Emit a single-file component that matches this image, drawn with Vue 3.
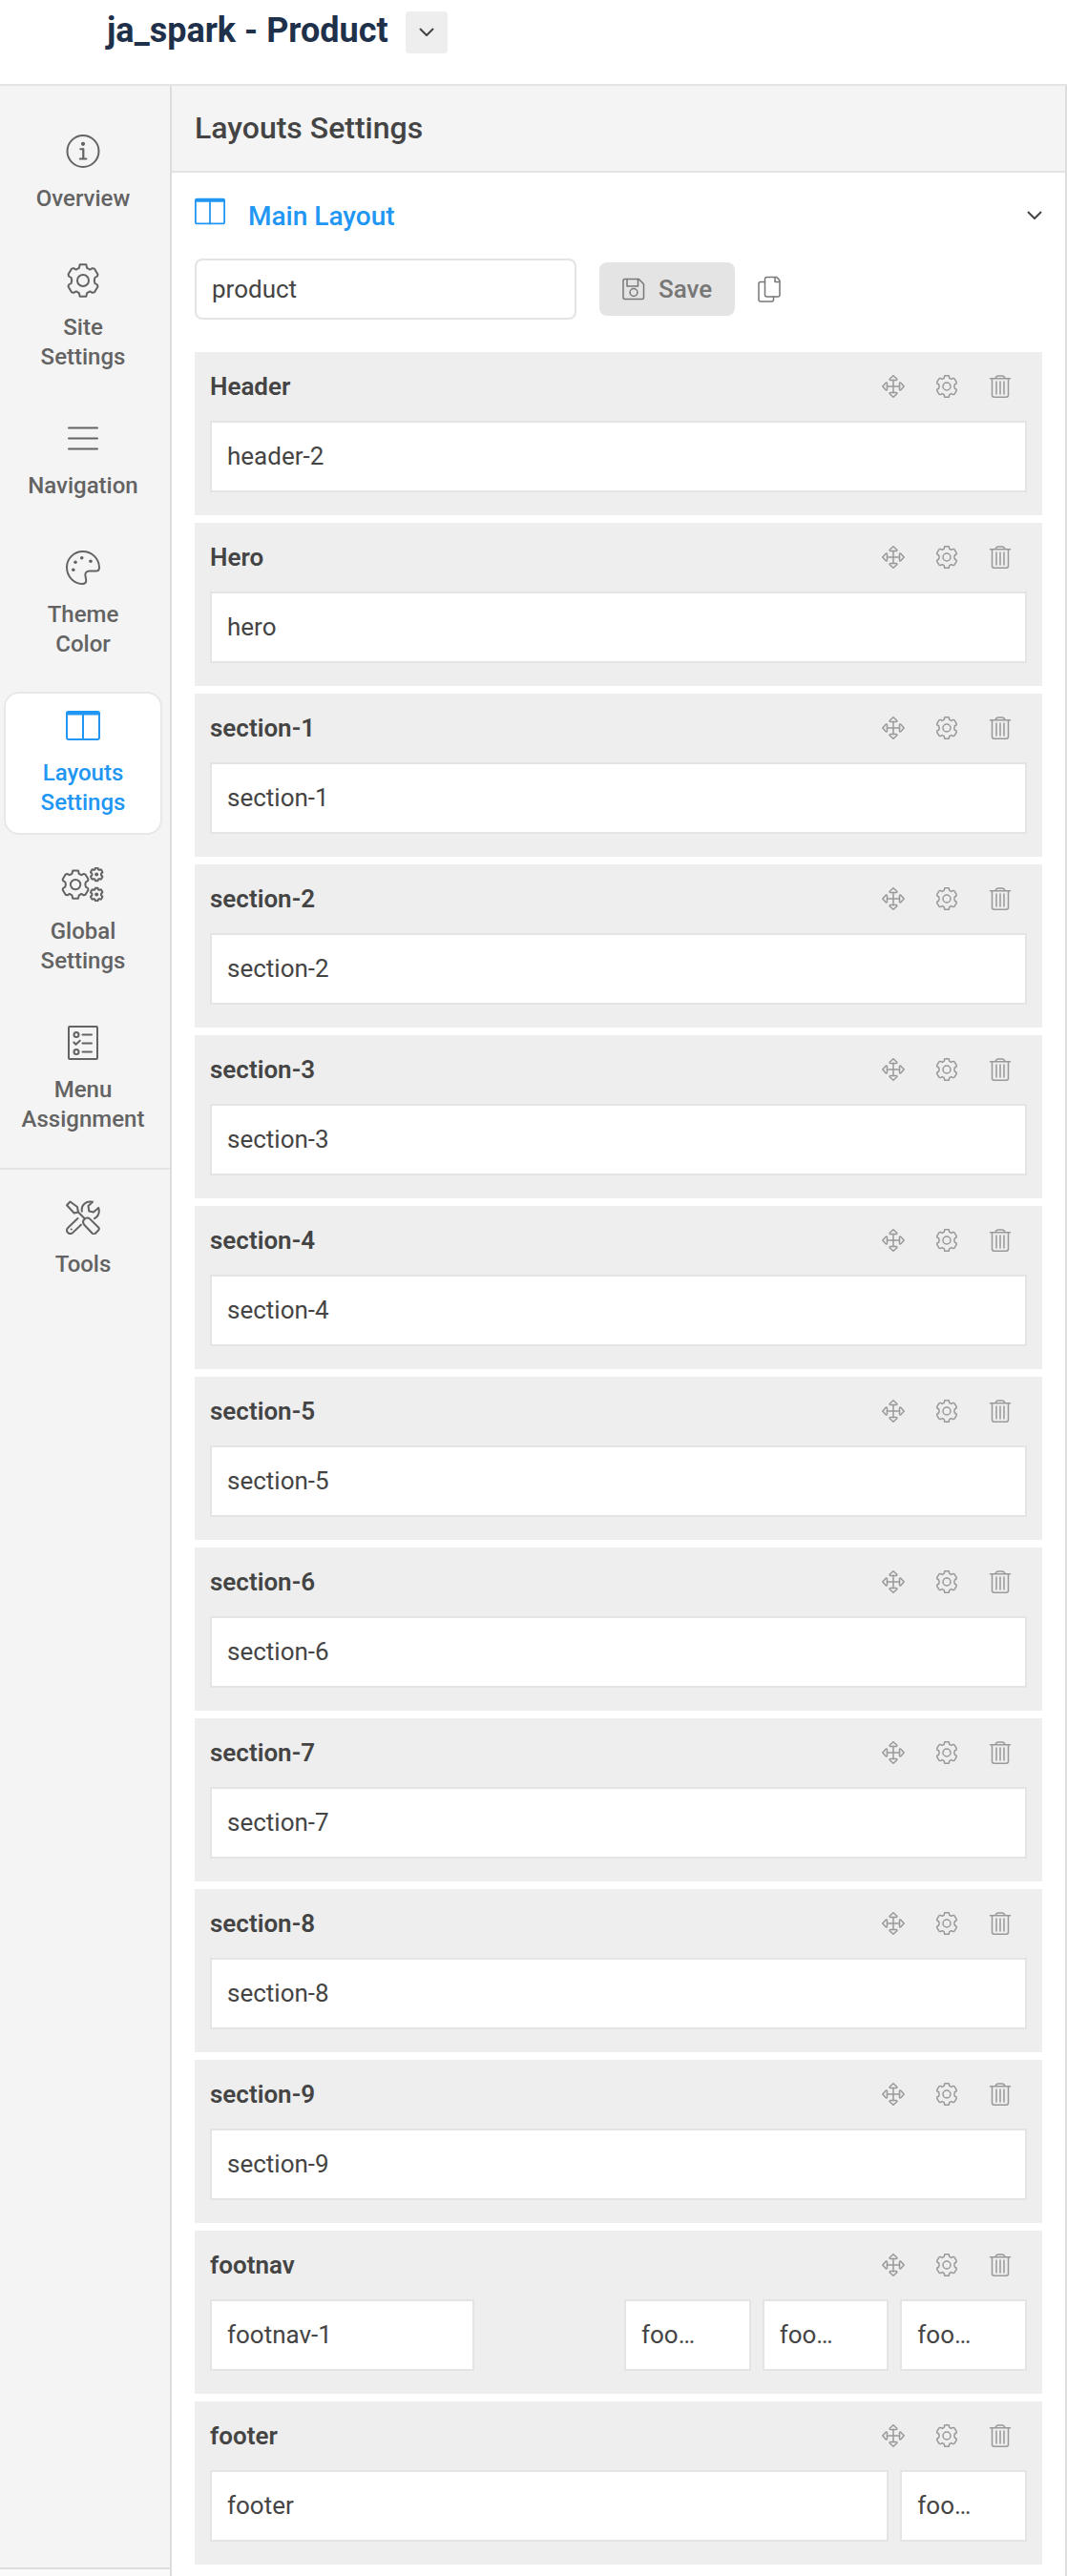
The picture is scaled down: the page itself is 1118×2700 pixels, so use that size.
<script setup>
import { ref } from 'vue'

const layoutName = ref('product')

const menu = [
  { icon: 'info', lines: ['Overview'] },
  { icon: 'gear', lines: ['Site', 'Settings'] },
  { icon: 'bars', lines: ['Navigation'] },
  { icon: 'palette', lines: ['Theme', 'Color'] },
  { icon: 'layout', lines: ['Layouts', 'Settings'], active: true },
  { icon: 'gears', lines: ['Global', 'Settings'] },
  { icon: 'list', lines: ['Menu', 'Assignment'] }
]

const actions = [
  { icon: 'move', label: 'Move' },
  { icon: 'gear', label: 'Settings' },
  { icon: 'trash', label: 'Delete' }
]

// every section is a six column row
const full = (title, name) => ({ title, cols: [{ name, size: 'w6' }] })

const sections = [
  full('Header', 'header-2'),
  full('Hero', 'hero'),
  ...Array.from({ length: 9 }, (_, i) => full(`section-${i + 1}`, `section-${i + 1}`)),
  {
    title: 'footnav',
    cols: [
      { name: 'footnav-1', size: 'w2' },
      { name: 'foo…', size: 'w1 offset' },
      { name: 'foo…', size: 'w1' },
      { name: 'foo…', size: 'w1' }
    ]
  },
  {
    title: 'footer',
    cols: [
      { name: 'footer', size: 'w5' },
      { name: 'foo…', size: 'w1' }
    ]
  }
]
</script>

<template>
  <div class="page">
    <svg class="sprite">
      <symbol id="chevron" viewBox="0 0 16 16">
        <path d="M1.5 4.5 8 11l6.5-6.5" />
      </symbol>
      <symbol id="info" viewBox="0 0 36 36">
        <circle cx="18" cy="17.5" r="16.5" />
        <circle cx="18" cy="9.8" r="2.1" fill="currentColor" stroke="none" />
        <path d="M15.2 15.2h3v10M14.8 25.6h6.6M18.4 15.2v10" />
      </symbol>
      <symbol id="gear" viewBox="0 0 24 24">
        <path id="gear-shape" vector-effect="non-scaling-stroke" d="M9.8.8h4.4l.6 2.5 2 1.1 1.8-1 1.4.4 2.3 3.9-.3 1.3-1.7 1q-.9 2 0 4l1.7 1 .3 1.3-2.3 3.9-1.4.4-1.8-1-2 1.1-.6 2.5H9.8l-.6-2.5-2-1.1-1.8 1-1.4-.4-2.3-3.9.3-1.3 1.7-1q.9-2 0-4L2 9l-.3-1.3L4 3.8l1.4-.4 1.8 1 2-1.1z" />
        <circle vector-effect="non-scaling-stroke" cx="12" cy="12" r="4" />
      </symbol>
      <symbol id="bars" viewBox="0 0 36 36">
        <path d="M3 6.500h30M3 17.500h30M3 28.500h30" />
      </symbol>
      <symbol id="palette" viewBox="0 0 36 36">
        <path d="M17.8 1C8.5 1 1 8.4 1 17.6 1 27.2 8.4 35 17 35c3.4 0 4.6-1.8 4.2-4.4l-.8-4.2c-.6-3 1.3-4.8 4.4-4.8h6.6c2.3 0 3.6-1.2 3.6-3.6C34.8 8.4 27.2 1 17.8 1z" />
        <g fill="currentColor" stroke="none">
          <circle cx="16.7" cy="7.8" r="1.8" />
          <circle cx="26" cy="11.2" r="1.8" />
          <circle cx="10" cy="12.2" r="1.8" />
          <circle cx="7.8" cy="20.2" r="1.8" />
        </g>
      </symbol>
      <symbol id="layout" viewBox="0 0 36 36">
        <rect x="1" y="3" width="34" height="29" rx="2" />
        <path d="M18 4v28" />
        <path d="M2 4.4h32" stroke-width="4" />
      </symbol>
      <symbol id="gears" viewBox="0 0 46 36">
        <g transform="translate(-.5 2.5) scale(1.3)">
          <use href="#gear-shape" />
          <circle vector-effect="non-scaling-stroke" cx="12" cy="12" r="4" />
        </g>
        <g fill="#f4f4f4">
          <use href="#gear-shape" transform="translate(30 .3) scale(.6)" />
          <use href="#gear-shape" transform="translate(30 21.3) scale(.6)" />
        </g>
        <g fill="currentColor" stroke="none">
          <circle cx="37.2" cy="7.5" r="2" />
          <circle cx="37.2" cy="28.5" r="2" />
        </g>
      </symbol>
      <symbol id="list" viewBox="0 0 36 36">
        <rect x="3" y="1" width="30" height="34" rx="1" />
        <circle cx="11" cy="9.5" r="2.5" />
        <circle cx="11" cy="27.5" r="2.5" />
        <path d="M17.500 9.500H27M17.500 18.500H27M17.500 27.500H27M8.300 17.500l2.200 2.300 4.300-4" />
      </symbol>
      <symbol id="tools" viewBox="0 0 36 36">
        <path d="M1 5.200 4.500 1.500 12 7l1 5.500-4.300 1zM13 12.500l6.800 6.800" />
        <path d="M19.500 19.800c1.600-1.700 4.200-1.700 5.700-.2l9 8.900c.9.900.9 2 .1 2.800L30.700 35c-.8.800-1.900.7-2.700 0l-8.500-9c-1.700-1.900-1.700-4.500 0-6.200z" />
        <path d="M16.800 11.700C15.800 5 21 .3 28 1.700L23.500 6l.8 5.600 4.700.9 5.200-4.600c1.500 5-.4 9-4.200 11.300M12.500 19 2.300 28.800c-1.600 1.700-1.600 3.700-.2 5.200s3.700 1.500 5.300-.1l8.500-8.200" />
        <circle cx="5.800" cy="30.500" r="1.100" fill="currentColor" stroke="none" />
      </symbol>
      <symbol id="save" viewBox="0 0 24 24">
        <path d="M2.500 1.500h14.800l5.200 5.200V21q0 1.500-1.500 1.500H2.500Q1 22.500 1 21V3q0-1.500 1.500-1.500zM5 1.500V9h11.500V1.500" />
        <circle cx="12" cy="15.500" r="3.900" />
      </symbol>
      <symbol id="copy" viewBox="0 0 24 28">
        <path d="M9.500 1.500h10.300L23 5.100V20q0 2-2 2H9.500q-2 0-2-2V3.500q0-2 2-2zM18 1.800v4.700h5" />
        <path d="M7.500 6.500H3q-2 0-2 2V25q0 2 2 2h11.500q2 0 2-2v-3" />
      </symbol>
      <symbol id="move" viewBox="0 0 24 24">
        <path d="M12 5.500v13M5.500 12h13" />
        <path d="M12 .8 8.200 4.200q-.4 1.300.8 1.300h6q1.200 0 .8-1.300zM12 23.200l-3.800-3.400q-.4-1.300.8-1.300h6q1.200 0 .8 1.300zM.8 12l3.400-3.800q1.300-.4 1.300.8v6q0 1.200-1.300.8zM23.200 12l-3.400-3.800q-1.300-.4-1.300.8v6q0 1.200 1.300.8z" />
      </symbol>
      <symbol id="trash" viewBox="0 0 24 24">
        <path d="M1.500 3.800h21M7 3.600C7.600 1.700 8.700.9 10 .9h4c1.300 0 2.400.8 3 2.700M3.500 3.800V21q0 2.200 2.200 2.200h12.600q2.200 0 2.200-2.200V3.800M8 7v13M12 7v13M16 7v13" />
      </symbol>
    </svg>

    <header class="topbar">
      <h1>ja_spark - Product</h1>
      <button class="switch" aria-label="Switch template">
        <svg><use href="#chevron" /></svg>
      </button>
    </header>

    <div class="body">
      <aside class="sidebar">
        <nav>
          <a v-for="item in menu" :key="item.icon" href="#" class="item" :class="{ active: item.active }">
            <svg :class="item.icon"><use :href="'#' + item.icon" /></svg>
            <span v-for="line in item.lines" :key="line">{{ line }}</span>
          </a>
        </nav>
        <nav class="extra">
          <a href="#" class="item">
            <svg><use href="#tools" /></svg>
            <span>Tools</span>
          </a>
        </nav>
        <div class="sidebar-foot"></div>
      </aside>

      <main class="panel">
        <h2>Layouts Settings</h2>

        <div class="content">
          <div class="layout-head">
            <svg class="layout-icon"><use href="#layout" /></svg>
            <h3>Main Layout</h3>
            <button class="toggle" aria-label="Toggle layout">
              <svg><use href="#chevron" /></svg>
            </button>
          </div>

          <div class="name-row">
            <input v-model="layoutName" type="text" aria-label="Layout name" />
            <button class="save">
              <svg><use href="#save" /></svg>
              Save
            </button>
            <button class="copy" aria-label="Duplicate">
              <svg><use href="#copy" /></svg>
            </button>
          </div>

          <section v-for="section in sections" :key="section.title" class="section">
            <div class="section-head">
              <h4>{{ section.title }}</h4>
              <div class="actions">
                <button v-for="action in actions" :key="action.icon" :aria-label="action.label">
                  <svg><use :href="'#' + action.icon" /></svg>
                </button>
              </div>
            </div>
            <div class="cols">
              <div v-for="(col, i) in section.cols" :key="i" class="col" :class="col.size">{{ col.name }}</div>
            </div>
          </section>
        </div>
      </main>
    </div>
  </div>
</template>

<style>
body {
  margin: 0;
  background: #fff;
}
</style>

<style scoped>
* {
  box-sizing: border-box;
}

.page {
  display: flex;
  flex-direction: column;
  min-height: 100vh;
  font-family: Roboto, "Liberation Sans", sans-serif;
  font-size: 26px;
  color: #444;
}

h1,
h2,
h3,
h4 {
  margin: 0;
}

button {
  display: flex;
  align-items: center;
  justify-content: center;
  padding: 0;
  border: none;
  background: none;
  font: inherit;
  color: inherit;
  cursor: pointer;
}

svg {
  flex: none;
  fill: none;
  stroke: currentColor;
  stroke-width: 2px;
  stroke-linecap: round;
  stroke-linejoin: round;
}

.sprite {
  display: none;
}

.topbar {
  display: flex;
  align-items: flex-start;
  gap: 18px;
  height: 90px;
  padding: 12px 112px;
  border-bottom: 2px solid #e4e4e4;
}

.topbar h1 {
  font-size: 36px;
  line-height: 40px;
  font-weight: 700;
  color: #1f314a;
}

.switch {
  width: 44px;
  height: 44px;
  border-radius: 4px;
  background: #eee;
}

.switch svg,
.toggle svg {
  width: 16px;
  height: 16px;
}

.body {
  flex: 1;
  display: flex;
}

.sidebar {
  width: 180px;
  flex: none;
  display: flex;
  flex-direction: column;
  background: #f4f4f4;
  border-right: 2px solid #ddd;
}

.sidebar nav {
  display: flex;
  flex-direction: column;
  gap: 16px;
  padding: 33px 8px 17px 4px;
}

.sidebar .extra {
  flex: 1;
  padding-top: 14px;
  border-top: 2px solid #e4e4e4;
}

.item {
  display: flex;
  flex-direction: column;
  align-items: center;
  padding: 16px 0;
  border: 2px solid transparent;
  border-radius: 16px;
  font-size: 24px;
  line-height: 31px;
  font-weight: 500;
  color: #636363;
  text-decoration: none;
}

.item svg {
  width: 36px;
  height: 36px;
  margin-bottom: 16px;
}

.item svg.gears {
  width: 46px;
}

.item.active {
  background: #fff;
  border-color: #e8e8e8;
  color: #2196f3;
}

.sidebar-foot {
  height: 9px;
  border-top: 2px solid #ddd;
  background: #fafafa;
}

.panel {
  flex: 1;
  min-width: 0;
  border-right: 2px solid #ddd;
}

.panel h2 {
  padding: 0 24px;
  font-size: 32px;
  line-height: 89px;
  font-weight: 500;
  background: #f4f4f4;
  border-bottom: 2px solid #e4e4e4;
}

.content {
  padding: 0 24px 12px;
}

.layout-head {
  display: flex;
  align-items: center;
  height: 90px;
  color: #2196f3;
}

.layout-icon {
  width: 32px;
  height: 32px;
  margin: 0 24px 8px 0;
}

.layout-head h3 {
  font-size: 28px;
  font-weight: 500;
}

.toggle {
  margin-left: auto;
  color: #444;
}

.name-row {
  display: flex;
  align-items: center;
  gap: 24px;
  margin-bottom: 34px;
}

.name-row input {
  width: 400px;
  height: 64px;
  padding: 0 16px;
  border: 2px solid #e4e4e4;
  border-radius: 8px;
  font: inherit;
  color: inherit;
}

.save {
  gap: 14px;
  height: 56px;
  padding: 0 24px;
  border-radius: 8px;
  background: #e4e4e4;
  color: #777;
  font-weight: 500;
}

.save svg {
  width: 24px;
  height: 24px;
  stroke-width: 1.5px;
}

.copy svg {
  width: 24px;
  height: 28px;
  stroke-width: 1.5px;
  color: #777;
}

.section {
  padding: 0 16px 24px;
  background: #eee;
}

.section + .section {
  margin-top: 8px;
}

.section-head {
  display: flex;
  align-items: center;
  justify-content: space-between;
  height: 72px;
}

.section-head h4 {
  font-size: 26px;
  font-weight: 600;
}

.actions {
  display: flex;
  gap: 32px;
  padding-right: 16px;
  color: #999;
}

.actions svg {
  width: 24px;
  height: 24px;
  stroke-width: 1.5px;
}

.cols {
  display: grid;
  grid-template-columns: repeat(6, 1fr);
  gap: 12px;
}

.col {
  padding: 0 16px;
  border: 2px solid #e4e4e4;
  background: #fff;
  line-height: 71px;
}

.w1 {
  grid-column: span 1;
}

.w2 {
  grid-column: span 2;
}

.w5 {
  grid-column: span 5;
}

.w6 {
  grid-column: span 6;
}

.offset {
  grid-column: 4 / span 1;
}
</style>
